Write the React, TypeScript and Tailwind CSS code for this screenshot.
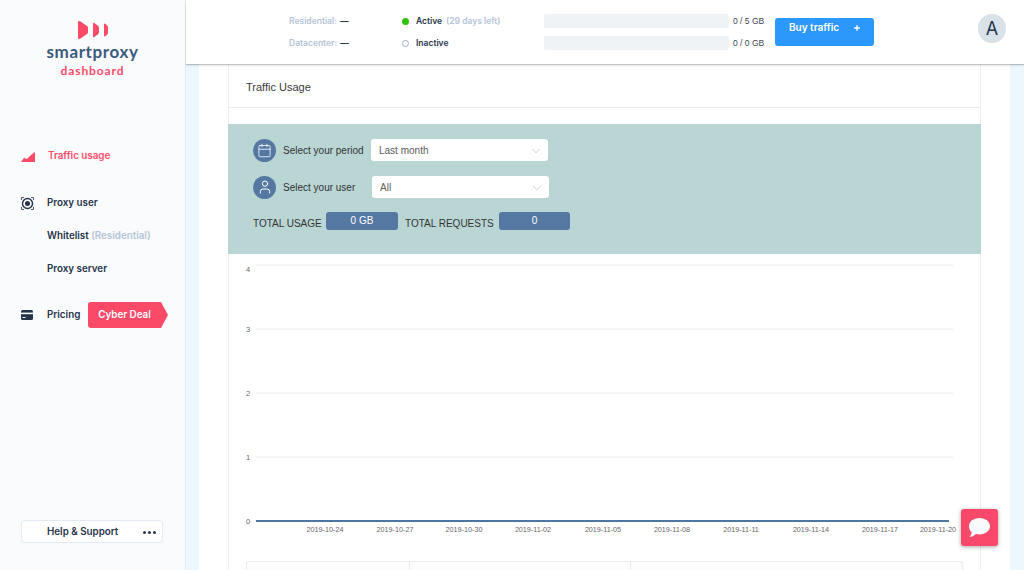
import { Calendar, ChevronDown, Plus, User } from 'lucide-react';

const yTicks = [
  { label: '4', y: 11, labelY: 18 },
  { label: '3', y: 75, labelY: 78 },
  { label: '2', y: 139, labelY: 142 },
  { label: '1', y: 203, labelY: 206 },
];

const dates = [
  { label: '2019-10-24', x: 96 },
  { label: '2019-10-27', x: 166 },
  { label: '2019-10-30', x: 235 },
  { label: '2019-11-02', x: 304 },
  { label: '2019-11-05', x: 374 },
  { label: '2019-11-08', x: 443 },
  { label: '2019-11-11', x: 512 },
  { label: '2019-11-14', x: 582 },
  { label: '2019-11-17', x: 651 },
  { label: '2019-11-20', x: 709 },
];

function Logo() {
  return (
    <div className="flex flex-col items-center pt-[21px]">
      <svg width="30" height="18" viewBox="0 0 30 18">
        <path d="M0 0.8 Q0 0 1 0 L2.5 0.5 L9 5 Q10 5.7 10 7 V11 Q10 12.3 9 13 L2.5 17.5 L1 18 Q0 18 0 17.2 Z" fill="#fb4a68" />
        <path d="M15 2.4 Q15 1.6 16 1.8 L20 4.8 Q21 5.6 21 7 V11 Q21 12.4 20 13.2 L16 16.2 Q15 16.4 15 15.6 Z" fill="#fb4a68" />
        <path d="M26 3 Q26 2.4 27 2.6 L29 4.2 Q30 5 30 6.4 V11.6 Q30 13 29 13.8 L27 15.4 Q26 15.6 26 15 Z" fill="#fb4a68" />
      </svg>
      <div className="mt-[3px] font-['Lato',sans-serif] text-[17px] font-bold leading-[20px] tracking-[0.6px] text-[#3a5a7d]">smartproxy</div>
      <div className="mt-[1px] font-['Lato',sans-serif] text-[12px] font-bold leading-[16px] tracking-[0.9px] text-[#fb4a68]">dashboard</div>
    </div>
  );
}

function Sidebar() {
  return (
    <aside className="flex h-full w-[186px] shrink-0 flex-col border-r border-[#e6e9ee] bg-[#fafbfd] font-['Inter',sans-serif] text-[9.8px] font-semibold text-[#26344a]">
      <Logo />
      <nav className="mt-[69px] flex flex-1 flex-col pl-[21px]">
        <div className="flex h-[16px] items-center text-[#fb4a68]">
          <svg width="14" height="10" viewBox="0 0 14 10" className="mt-[1px]">
            <path d="M0 10 L3 6 L6 7 L10 3 L14 0 V10 Z" fill="#fb4a68" />
          </svg>
          <span className="ml-[13px]">Traffic usage</span>
        </div>
        <div className="mt-[31px] flex h-[16px] items-center">
          <svg width="13" height="13" viewBox="0 0 13 13">
            <circle cx="6.5" cy="6.5" r="5" fill="none" stroke="#26344a" strokeWidth="1.4" />
            <circle cx="6.5" cy="6.5" r="2.5" fill="#26344a" />
            <path d="M0.5 3 V0.5 H3 M10 0.5 H12.5 V3 M12.5 10 V12.5 H10 M3 12.5 H0.5 V10" fill="none" stroke="#26344a" strokeWidth="0.8" />
          </svg>
          <span className="ml-[13px]">Proxy user</span>
        </div>
        <div className="mt-[17px] h-[16px] pl-[26px] leading-[16px]">
          Whitelist <span className="text-[#b4c4d6]">(Residential)</span>
        </div>
        <div className="mt-[17px] h-[16px] pl-[26px] leading-[16px]">Proxy server</div>
        <div className="mt-[25px] flex h-[26px] items-center">
          <svg width="12" height="10" viewBox="0 0 12 10">
            <rect width="12" height="10" rx="1.5" fill="#26344a" />
            <rect y="2.6" width="12" height="1.6" fill="#fafbfd" />
            <rect x="1.5" y="7" width="3" height="1" fill="#fafbfd" />
          </svg>
          <span className="ml-[14px] w-[41px]">Pricing</span>
          <div className="relative flex h-[26px] w-[73px] items-center justify-center rounded-l-[3px] bg-[#fb4a68] text-white">
            Cyber Deal
            <span className="absolute left-full top-0 h-0 w-0 border-y-[13px] border-l-[7px] border-y-transparent border-l-[#fb4a68]" />
          </div>
        </div>
        <div className="mt-auto mb-[27px] flex h-[23px] w-[142px] items-center justify-between rounded-[4px] border border-[#e3e9f0] bg-white pl-[25px] pr-[6px] pt-[2px]">
          <span>Help &amp; Support</span>
          <span className="flex gap-[2px]">
            <i className="h-[3px] w-[3px] rounded-full bg-[#26344a]" />
            <i className="h-[3px] w-[3px] rounded-full bg-[#26344a]" />
            <i className="h-[3px] w-[3px] rounded-full bg-[#26344a]" />
          </span>
        </div>
      </nav>
    </aside>
  );
}

function Meter({ text }: { text: string }) {
  return (
    <div className="flex items-center">
      <div className="h-[14px] w-[185px] rounded-[2px] bg-[#f0f3f6]" />
      <span className="ml-[4px] font-['Liberation_Sans',sans-serif] text-[8.5px] font-normal text-[#3c4654]">{text}</span>
    </div>
  );
}

function TopBar() {
  return (
    <header className="relative z-10 flex h-[64px] shrink-0 bg-white pl-[103px] font-['Inter',sans-serif] shadow-[0_1px_1px_rgba(0,0,0,0.2),0_2px_3px_rgba(0,0,0,0.06)]">
      <div className="mt-[14px] flex h-[36px] w-[113px] flex-col justify-between text-[8.5px] font-semibold leading-[14px] text-[#b4c4d6]">
        <div className="flex h-[14px] items-center">Residential: <span className="ml-[3px] text-[#26344a]">—</span></div>
        <div className="flex h-[14px] items-center">Datacenter: <span className="ml-[3px] text-[#26344a]">—</span></div>
      </div>
      <div className="mt-[14px] flex h-[36px] w-[142px] flex-col justify-between text-[8.5px] font-semibold text-[#26344a]">
        <div className="flex h-[14px] items-center">
          <span className="h-[7px] w-[7px] rounded-full bg-[#2fc40a]" />
          <span className="ml-[7px]">Active</span>
          <span className="ml-[4px] text-[#b4c4d6]">(29 days left)</span>
        </div>
        <div className="flex h-[14px] items-center">
          <span className="h-[7px] w-[7px] rounded-full border border-[#9fb0c3]" />
          <span className="ml-[7px]">Inactive</span>
        </div>
      </div>
      <div className="mt-[14px] flex h-[36px] w-[231px] flex-col justify-between">
        <Meter text="0 / 5 GB" />
        <Meter text="0 / 0 GB" />
      </div>
      <button className="mt-[18px] flex h-[28px] w-[99px] items-start justify-between rounded-[3px] bg-[#2d98fc] pl-[14px] pr-[13px] pt-[2px] text-[10px] font-semibold text-white">
        <span>Buy traffic</span>
        <Plus size={8} strokeWidth={4} className="mt-[4px]" />
      </button>
      <div className="ml-[104px] mt-[14px] flex h-[29px] w-[28px] items-center justify-center rounded-full bg-[#d9e1e9] text-[18px] font-normal text-[#26344a]">A</div>
    </header>
  );
}

function SelectBox({ value }: { value: string }) {
  return (
    <div className="flex h-[22px] w-[177px] items-center justify-between rounded-[3px] bg-white pl-[8px] pr-[5px] pt-[1px] text-[10px] text-[#5d5d5d]">
      <span>{value}</span>
      <ChevronDown size={14} strokeWidth={0.9} className="text-[#a0a0a0]" />
    </div>
  );
}

function Filters() {
  return (
    <div className="-mx-px h-[130px] bg-[#b9d6d5] pl-[25px] pt-[14px] font-['Liberation_Sans',sans-serif] text-[10px] text-[#333333]">
      <div className="flex h-[24px] items-center">
        <span className="flex h-[23px] w-[23px] items-center justify-center rounded-full bg-[#5578a3] text-white">
          <Calendar size={15} strokeWidth={1.25} />
        </span>
        <span className="ml-[7px] w-[88px]">Select your period</span>
        <SelectBox value="Last month" />
      </div>
      <div className="mt-[13px] flex h-[24px] items-center">
        <span className="flex h-[23px] w-[23px] items-center justify-center rounded-full bg-[#5578a3] text-white">
          <User size={16} strokeWidth={1.5} />
        </span>
        <span className="ml-[7px] w-[89px]">Select your user</span>
        <SelectBox value="All" />
      </div>
      <div className="mt-[12px] flex h-[19px] items-center">
        <span className="mt-[6px] w-[73px]">TOTAL USAGE</span>
        <span className="flex h-[18px] w-[72px] items-center justify-center rounded-[3px] bg-[#5578a3] pb-[1px] text-white">0 GB</span>
        <span className="ml-[7px] mt-[6px] w-[94px]">TOTAL REQUESTS</span>
        <span className="flex h-[18px] w-[71px] items-center justify-center rounded-[3px] bg-[#5578a3] pb-[1px] text-white">0</span>
      </div>
    </div>
  );
}

function Chart() {
  return (
    <svg width="751" height="307" viewBox="0 0 751 307" className="block font-['Liberation_Sans',sans-serif]">
      {yTicks.map((t) => (
        <g key={t.label}>
          <line x1="27" x2="724" y1={t.y} y2={t.y} stroke="#ececec" strokeWidth="1" />
          <text x="19" y={t.labelY} fontSize="7.5" fill="#666" textAnchor="middle">{t.label}</text>
        </g>
      ))}
      <line x1="27" x2="720" y1="267" y2="267" stroke="#4f76a3" strokeWidth="2" />
      <text x="19" y="270" fontSize="7.5" fill="#666" textAnchor="middle">0</text>
      {dates.map((d) => (
        <text key={d.label} x={d.x} y="278" fontSize="7.2" fill="#666" textAnchor="middle">{d.label}</text>
      ))}
    </svg>
  );
}

function UsageTable() {
  return (
    <div className="mx-[17px] flex h-[20px] rounded-t-[3px] border border-b-0 border-[#ececec] bg-[#fcfcfc]">
      <div className="w-[163px] border-r border-[#ececec]" />
      <div className="w-[221px] border-r border-[#ececec]" />
      <div className="flex-1" />
    </div>
  );
}

export default function App() {
  return (
    <div className="relative flex h-[570px] w-[1024px] overflow-hidden bg-white">
      <Sidebar />
      <main className="flex h-full min-w-0 flex-1 flex-col">
        <TopBar />
        <div className="min-h-0 flex-1 bg-[#ecf8fe] pl-[13px] pr-[14px]">
          <div className="h-full bg-white px-[29px]">
            <section className="h-full border-x border-[#eeeeee]">
              <div className="flex h-[44px] items-center border-b border-[#ececec] pl-[17px] pt-[3px] font-['Liberation_Sans',sans-serif] text-[11px] text-[#3b3b3b]">
                Traffic Usage
              </div>
              <div className="h-[16px]" />
              <Filters />
              <Chart />
              <UsageTable />
            </section>
          </div>
        </div>
      </main>
      <button className="absolute left-[961px] top-[509px] flex h-[37px] w-[37px] items-center justify-center rounded-[3px] bg-[#f9496a] shadow-[0_1px_4px_rgba(0,0,0,0.35)]">
        <svg width="23" height="21" viewBox="0 0 23 21">
          <path d="M11.5 1 C17.5 1 22 4.6 22 9.2 C22 13.8 17.5 17.4 11.5 17.4 C10.2 17.4 9 17.2 7.9 16.9 C6.6 18.4 4.2 19.8 1.6 19.8 C2.8 18.4 3.6 16.8 3.7 15 C2 13.6 1 11.5 1 9.2 C1 4.6 5.5 1 11.5 1 Z" fill="#f8fafc" />
        </svg>
      </button>
    </div>
  );
}
